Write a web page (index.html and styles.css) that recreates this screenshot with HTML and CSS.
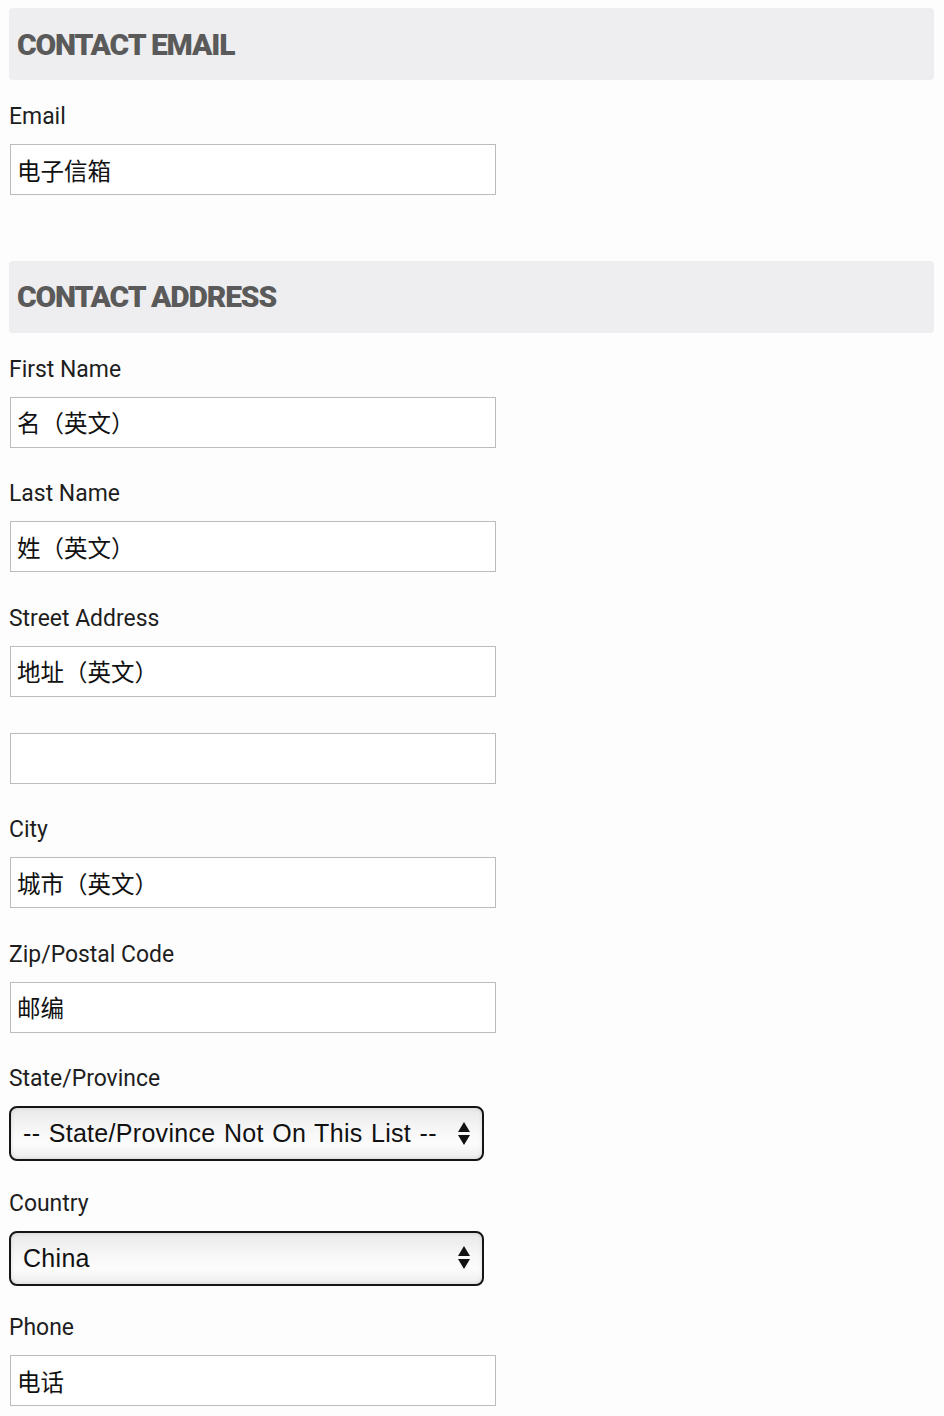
FILE: index.html
```html
<!DOCTYPE html>
<html lang="zh">
<head>
<meta charset="utf-8">
<title>Contact</title>
<link rel="stylesheet" href="styles.css">
</head>
<body>
<section class="section">
  <h2 class="section-title">CONTACT EMAIL</h2>
  <div class="field">
    <label class="label">Email</label>
    <div class="input">电子信箱</div>
  </div>
</section>
<section class="section">
  <h2 class="section-title">CONTACT ADDRESS</h2>
  <div class="field">
    <label class="label">First Name</label>
    <div class="input">名（英文）</div>
  </div>
  <div class="field">
    <label class="label">Last Name</label>
    <div class="input">姓（英文）</div>
  </div>
  <div class="field">
    <label class="label">Street Address</label>
    <div class="input">地址（英文）</div>
    <div class="input input-extra"></div>
  </div>
  <div class="field">
    <label class="label">City</label>
    <div class="input">城市（英文）</div>
  </div>
  <div class="field">
    <label class="label">Zip/Postal Code</label>
    <div class="input">邮编</div>
  </div>
  <div class="field field-select">
    <label class="label">State/Province</label>
    <div class="select">
      <span class="select-text">-- State/Province Not On This List --</span>
      <svg class="select-arrows" width="12" height="24" viewBox="0 0 12 24"><path d="M6 0 L12 10 L0 10 Z M0 13 L12 13 L6 23 Z" fill="#111"/></svg>
    </div>
  </div>
  <div class="field field-select">
    <label class="label">Country</label>
    <div class="select">
      <span class="select-text">China</span>
      <svg class="select-arrows" width="12" height="24" viewBox="0 0 12 24"><path d="M6 0 L12 10 L0 10 Z M0 13 L12 13 L6 23 Z" fill="#111"/></svg>
    </div>
  </div>
  <div class="field">
    <label class="label">Phone</label>
    <div class="input">电话</div>
  </div>
</section>
</body>
</html>
```

FILE: styles.css
```css
html, body {
  margin: 0;
  background: #fdfdfd;
}
body {
  padding: 8px 10px 0 9px;
  font-family: Roboto, "Noto Sans CJK SC", sans-serif;
}
.section {
  display: flow-root;
  margin-bottom: 33px;
}
.section-title {
  margin: 0 0 23px 0;
  height: 72px;
  box-sizing: border-box;
  padding: 0 8px;
  display: flex;
  align-items: center;
  background: #eeeef0;
  border-radius: 4px;
  color: #5a5a5a;
  font-family: Roboto, sans-serif;
  font-weight: 900;
  font-size: 30px;
  letter-spacing: -1.15px;
}
.field {
  display: flex;
  flex-direction: column;
  align-items: flex-start;
  margin-bottom: 32.5px;
}
.field-select {
  margin-bottom: 28.5px;
}
.label {
  display: block;
  font-family: Roboto, sans-serif;
  font-size: 24px;
  line-height: 26px;
  color: #1e1e1e;
  margin-bottom: 15px;
  white-space: nowrap;
  transform: scaleX(0.955);
  transform-origin: left center;
}
.input {
  box-sizing: border-box;
  width: 486px;
  height: 51px;
  margin-left: 1px;
  border: 1px solid #bcbcbc;
  background: #fff;
  padding: 0 6px;
  display: flex;
  align-items: center;
  font-family: "Noto Sans CJK SC", sans-serif;
  font-size: 23.5px;
  color: #111;
}
.input-extra {
  margin-top: 36px;
}
.select {
  box-sizing: border-box;
  width: 475px;
  height: 55px;
  border: 2px solid #151515;
  border-radius: 8px;
  background: linear-gradient(#e9e9ea 0%, #f7f7f7 45%, #fcfcfc 70%, #ededed 100%);
  box-shadow: inset 0 0 4px rgba(0,0,0,0.12);
  display: flex;
  align-items: center;
  padding: 0 12px 0 12px;
  font-family: "Liberation Sans", Arial, sans-serif;
  font-size: 25px;
  letter-spacing: 0.3px;
  word-spacing: 1.2px;
  color: #111;
}
.select-text {
  flex: 1;
  white-space: nowrap;
}
.select-arrows {
  flex: none;
}
```
